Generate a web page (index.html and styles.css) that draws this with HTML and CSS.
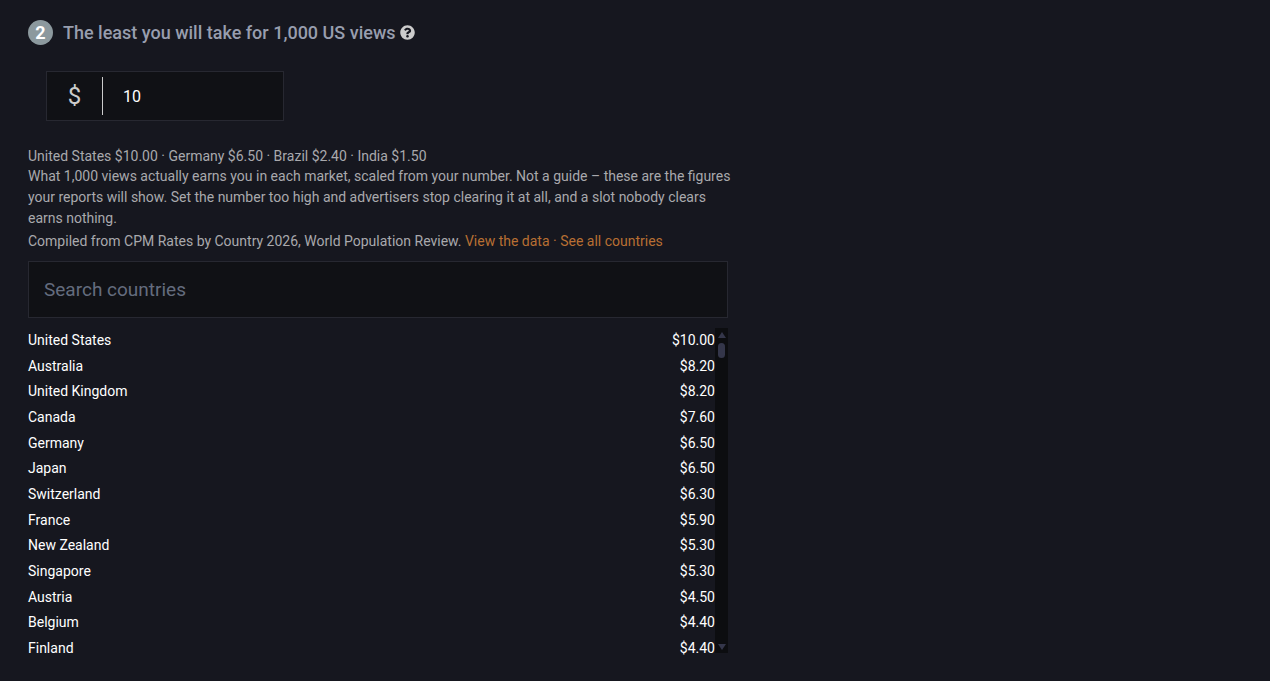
FILE: index.html
```html
<!DOCTYPE html>
<html lang="en">
<head>
    <meta charset="utf-8">
    <title>Minimum rate</title>
    <link rel="stylesheet" href="styles.css">
</head>
<body>
    <section class="step">
        <!-- Heading -->
        <div class="step-header">
            <span class="step-number">2</span>
            <h2><label for="rate">The least you will take for 1,000 US views</label></h2>
            <button class="help" type="button" aria-label="Help">
                <svg viewBox="0 0 512 512" width="15" height="15"><path fill="currentColor" d="M504 256c0 137-111 248-248 248S8 393 8 256C8 119 119 8 256 8s248 111 248 248zM262.700 90c-54.500 0-89.300 23-116.500 63.800-3.500 5.300-2.400 12.400 2.700 16.200l34.700 26.300c5.200 3.900 12.600 3 16.700-2.100 17.900-22.700 30.100-35.800 57.300-35.800 20.400 0 45.700 13.100 45.700 33 0 15-12.400 22.700-32.500 34C247.100 238.500 216 254.900 216 296v4c0 6.600 5.400 12 12 12h56c6.600 0 12-5.400 12-12v-1.300c0-28.500 83.200-29.600 83.200-106.700 0-58-60.200-102-116.500-102zM256 338c-25.400 0-46 20.600-46 46s20.600 46 46 46 46-20.600 46-46-20.600-46-46-46z"/></svg>
            </button>
        </div>

        <!-- Rate -->
        <div class="rate">
            <span class="currency">$</span>
            <input id="rate" type="text" inputmode="decimal" value="10">
        </div>

        <div class="notes">
            <p class="markets">United States $10.00 · Germany $6.50 · Brazil $2.40 · India $1.50</p>
            <p>What 1,000 views actually earns you in each market, scaled from your number. Not a guide – these are the figures your reports will show. Set the number too high and advertisers stop clearing it at all, and a slot nobody clears earns nothing.</p>
            <p class="source">Compiled from CPM Rates by Country 2026, World Population Review. <span class="links"><a href="#data">View the data</a> · <a href="#countries">See all countries</a></span></p>
        </div>

        <!-- Countries -->
        <input class="search" type="search" placeholder="Search countries" aria-label="Search countries">
        <div class="countries" id="countries">
            <div class="list">
                <table>
                    <tr><td>United States</td><td>$10.00</td></tr>
                    <tr><td>Australia</td><td>$8.20</td></tr>
                    <tr><td>United Kingdom</td><td>$8.20</td></tr>
                    <tr><td>Canada</td><td>$7.60</td></tr>
                    <tr><td>Germany</td><td>$6.50</td></tr>
                    <tr><td>Japan</td><td>$6.50</td></tr>
                    <tr><td>Switzerland</td><td>$6.30</td></tr>
                    <tr><td>France</td><td>$5.90</td></tr>
                    <tr><td>New Zealand</td><td>$5.30</td></tr>
                    <tr><td>Singapore</td><td>$5.30</td></tr>
                    <tr><td>Austria</td><td>$4.50</td></tr>
                    <tr><td>Belgium</td><td>$4.40</td></tr>
                    <tr><td>Finland</td><td>$4.40</td></tr>
                </table>
            </div>
            <div class="scrollbar" aria-hidden="true">
                <span class="arrow-up"></span>
                <span class="thumb"></span>
                <span class="arrow-down"></span>
            </div>
        </div>
    </section>
</body>
</html>
```
FILE: styles.css
```css
* {
    box-sizing: border-box;
}
body {
    background-color: #16171f;
    color: white;
    font-family: Roboto, sans-serif;
    font-size: 14px;
    margin: 0;
}
.step {
    max-width: 728px;
    padding: 20px 0 0 28px;
}
.step-header {
    display: flex;
    align-items: center;
}
.step-number {
    display: flex;
    align-items: center;
    justify-content: center;
    width: 25px;
    height: 25px;
    margin-right: 10px;
    border-radius: 50%;
    background-color: #8c999e;
    font-size: 18px;
    font-weight: 700;
}
h2 {
    margin: 0;
    color: #989eae;
    font-size: 18px;
    font-weight: 500;
    line-height: 24px;
}
.help {
    display: flex;
    margin-left: 4px;
    padding: 0;
    border: none;
    background: none;
    color: #cccccc;
}
.rate {
    display: flex;
    align-items: center;
    width: 238px;
    height: 50px;
    margin: 26px 0 25px 18px;
    border: 1px solid #272831;
    background-color: #101115;
}
.currency {
    width: 56px;
    border-right: 1px solid #cccccc;
    color: #cccccc;
    font-size: 24px;
    line-height: 38px;
    text-align: center;
}
.rate input {
    flex: 1;
    min-width: 0;
    padding: 0 20px;
    border: none;
    outline: none;
    background: none;
    color: white;
    font-family: inherit;
    font-size: 16px;
}
.notes {
    margin-right: -12px;
    color: #a9a9ad;
    line-height: 21px;
}
.notes p {
    margin: 0;
}
.notes .markets {
    line-height: 20px;
}
.notes .source {
    margin-top: 2px;
}
.links,
.links a {
    color: #b86f33;
    text-decoration: none;
}
.search {
    display: block;
    width: 100%;
    height: 57px;
    margin: 9px 0 10px;
    padding: 0 15px;
    border: 1px solid #272831;
    border-radius: 0;
    outline: none;
    appearance: none;
    background-color: #101115;
    color: white;
    font-family: inherit;
    font-size: 19px;
}
.search::placeholder {
    color: #646c7e;
}
.countries {
    display: flex;
}
.list {
    flex: 1;
}
table {
    width: 100%;
    height: 334px;
    border-collapse: collapse;
}
td {
    padding: 0 0 2px;
}
td:last-child {
    text-align: right;
}
.scrollbar {
    display: flex;
    flex-direction: column;
    align-items: center;
    width: 13px;
    height: 325px;
    padding: 4px 0 3px;
    background-color: #0c0d10;
}
.arrow-up,
.arrow-down {
    border: 4px solid transparent;
}
.arrow-up {
    border-top: none;
    border-bottom: 6px solid #34364a;
}
.arrow-down {
    margin-top: auto;
    border-bottom: none;
    border-top: 6px solid #34364a;
}
.thumb {
    width: 7px;
    height: 15px;
    margin-top: 5px;
    border-radius: 4px;
    background-color: #34364a;
}
```
